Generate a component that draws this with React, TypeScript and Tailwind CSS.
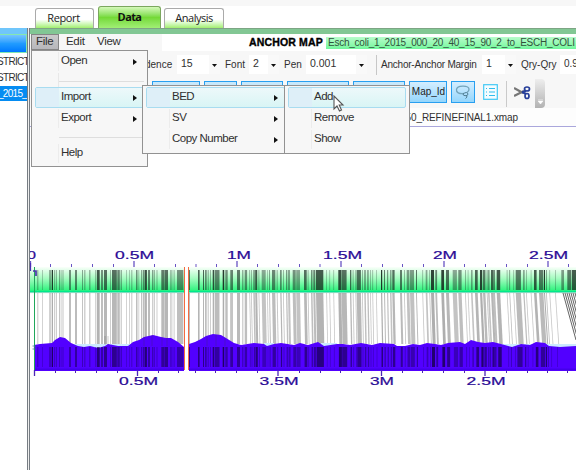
import React from 'react';

type Bar = [number, number, number];

// start, width, darkness of each nick site along the anchor map
const bars: Bar[] = [
  [37.3,1,.4],[42,.8,.3],[49.3,1.4,.5],[51.7,1.3,.9],[54.2,1,.4],[56.2,.8,.4],[59,1,.4],[60.7,.8,.35],[62.5,1,.35],[69,2,.5],[75,2,.55],[82,1,.4],[84.2,1.2,.35],[89.2,1.2,.4],
  [95.3,1,.4],[97,2.7,.75],[101,2,.5],[104,3,.65],[110,.8,.4],[112,4.8,.65],[117.3,2.5,.55],[120.7,1,.5],[126,.8,.3],[129.2,.8,.3],[131.3,1,.35],[136,1.5,.5],[138.5,.7,.4],[141,1.3,.4],[143,1.6,.5],[144.9,2,.8],[148,2,.55],[152.3,1,.6],[154,.8,.4],[156.6,.8,.4],[161.3,3.4,.6],[165,3,.65],[170.3,.8,.4],[171.5,.8,.4],[173.7,.8,.4],[177,6.3,.5],[188.7,1.3,.6],
  [198,1.6,.7],[203,1,.7],[205,1.7,.5],[207.7,1,.4],[210,.8,.4],[212.7,1.6,.8],[215,4.5,.55],[222.7,1.5,.9],[225.3,2.4,.5],[230,.8,.5],[231.2,1.6,.7],[237,3,.6],[242.3,1,.5],[244.7,2.4,.5],[249.3,.8,.4],[251,.8,.4],[253.3,1.5,.5],[255.2,2,.75],[258.5,.8,.4],[261.7,4,.4],[267,.8,.3],[269,1,.4],[272,3.3,.55],[276.7,.9,.4],[280.3,1.2,.7],[283,.8,.4],[286,1.3,.45],[288,2,.4],[292.7,3,.5],[296.2,3.8,.4],[304,2.7,.65],[307.7,.8,.4],[311,1.5,.5],[313.3,2,.55],[316,7.3,.75],[326.2,.8,.3],[329.3,.8,.3],[333.3,.8,.3],[338.3,3,.8],[341.6,5,.65],[350,1.3,.65],[352.7,.8,.4],[355.4,.8,.4],[356.7,4.2,.65],[362,.8,.4],[364.3,1.4,.5],[367.3,1.3,.5],[370,.8,.35],[372.3,.8,.35],[376,.8,.3],
  [381,1.2,.9],[384,1,.6],[387,1.2,.45],[390,1.5,.4],[392.3,2.3,.65],[400,2,.6],[404,.8,.4],[406.7,2.7,.45],[410,4,.45],[416,.9,.7],[422.3,.8,.35],[425.7,1.7,.4],[429.3,.8,.4],[431,3,.85],[435.3,1.8,.55],[441.3,2.7,.85],[446,3,.65],[452.7,4.2,.4],[458.3,3.3,.5],[465,.8,.4],[467.7,.8,.3],[471,1.6,.4],[475,2.7,.7],[480,2.2,.85],[483,2.4,.6],[486.7,.8,.5],[488,1.6,.4],[491,2,.7],[493,2,.5],[496.7,3.5,.75],[506.7,.8,.35],[509.3,.8,.5],[513.3,.8,.35],[515.7,5.2,.6],[523.3,1.2,.55],[526,.8,.35],[530.7,.8,.3],[534,2.6,.75],[539,4.3,.6],[544,1,.9],[546,.8,.5],[549.3,.8,.3],[555,.8,.3],[561.3,2.7,.45],[567.3,4,.6],[572,4,.75],
];

const profile = 'M34 371V345L40 344L52 343L55 340L60 337L65 338L71 343L78 346L84 347L90 346L98 348L105 346L108 344L118 346L128 346L133 342L139 340L144 337L153 335L161 337L166 338L171 338L178 342L184 347V371ZM189 371V344L195 342L201 339L206 336L213 334L221 335L226 338L234 343L241 345L254 343L264 344L267 346L274 344L281 343L294 345L300 343L308 345L318 342L324 346L337 344L343 344L350 345L361 343L372 345L380 343L394 344L397 346L405 346L413 344L420 345L427 343L435 344L441 345L448 343L460 342L465 344L471 340L478 342L485 343L493 342L501 344L512 347L521 344L530 345L536 342L545 343L549 346L560 347L576 346V371Z';

function Label({ x, y, w, children }: { x: number; y: number; w: number; children: string }) {
  return <text x={x} y={y} textLength={w} lengthAdjust="spacingAndGlyphs" fill="#2a0a96" stroke="#2a0a96" strokeWidth=".2" fontSize="10.5" fontFamily="Liberation Sans, sans-serif">{children}</text>;
}

function MapChart() {
  const top = [30.5,50.5,71.5,92.5,113.5,134,154.5,175.5,196,216.5,237,257.5,278.5,299.5,320,341,361.5,382.5,402.5,423.5,444,464.5,485.5,506.5,527.5,548,568.5];
  const bottom = [34.5,55.5,75.5,96.5,117.5,137.5,158.5,178.5,195.5,215.5,236.5,257.5,278,299.5,320.5,340.5,361.5,381.5,402.5,422.5,443.5,464.5,485,506.5,527.5,547.5,567.5];
  const major = [0, 5, 12, 17, 22];
  return (
    <svg className="block h-[343px] w-[546px]" viewBox="30 127 546 343">
      <defs>
        <linearGradient id="anchor" x1="0" x2="0" y1="0" y2="1"><stop stopColor="#fafffa" /><stop offset=".45" stopColor="#a6fcc1" /><stop offset="1" stopColor="#22f277" /></linearGradient>
      </defs>
      {top.map((x, i) => <path key={x} d={i % 5 ? `M${x} 264V267` : `M${x} 261V267`} stroke="#6853c3" strokeWidth={i % 5 ? 1 : 1.3} />)}
      <rect x="30" y="267" width="546" height="25" fill="url(#anchor)" />
      <path d="M30 291.5H576" stroke="#00e98b" strokeWidth="1.4" /><path d="M30 292.6H576" stroke="#58cda8" strokeWidth=".7" />
      {bars.map(([x, w, o], i) => {
        const shift = x > 246 ? 1 + Math.max(0, (x - 380) / 75) : 0;
        return <g key={i}>
          {x < 560 && <path d={`M${x} 293h${w}L${x + w + shift} 344h${-w}Z`} fill="#444" opacity={.22 + o * .25} />}
          <rect x={x} y="270" width={w} height="20" fill="#14251b" opacity={Math.min(1, o)} />
        </g>;
      })}
      {[0, 2, 4, 6, 8, 10, 12].map(n => <path key={n} d={`M${563 + n} 293L${576 + n} 340`} stroke="#3d3d3d" strokeWidth=".8" />)}
      <path d="M71 344H134V348H71ZM264 343H274V347H264ZM321 343H337V347H321ZM501 344H576V348H501Z" fill="#cceaff" />
      <path d={profile} fill="#5200ff" />
      {bars.map(([x, w, o], i) => {
        const shift = x > 246 ? 1 + Math.max(0, (x - 380) / 75) : 0;
        return x < 560 && <rect key={i} x={x + shift * .6} y="347" width={w} height="20" fill="#16004b" opacity={Math.min(1, o * .95)} />;
      })}
      <path d="M105 336V345M108 336V345M144 337V346M152 335V346M162 337V346M167 338V346M207 337V346M216 335V346M225 338V346" stroke="#333" strokeWidth=".7" opacity=".35" />
      <path d="M34 369.2H576" stroke="#3900d8" strokeWidth=".8" />
      <rect x="184" y="267" width="5" height="104" fill="white" />
      <path d="M184.5 267V370M188.5 267V370" stroke="#f36a42" strokeWidth="1" />
      {bottom.map((x, i) => <path key={x} d={major.includes(i) ? `M${x} 370V376` : `M${x} 370V373`} stroke="#4c24b6" strokeWidth={major.includes(i) ? 1.3 : 1} />)}
      <path d="M30.5 263V271" stroke="#4b2bb5" strokeWidth="1.2" />
      <path d="M34.5 267V370" stroke="#20a75b" /><path d="M33 271h3v5" fill="none" stroke="#4b36ac" strokeWidth="1.7" />
      <path d="M32.5 346h3l-1.5 2 1.5 1h-3" fill="none" stroke="#376b98" strokeWidth=".8" />
      <Label x={27} y={259} w={9}>0</Label><Label x={115} y={259} w={39}>0.5M</Label><Label x={227} y={259} w={24}>1M</Label><Label x={323} y={259} w={39}>1.5M</Label><Label x={433} y={259} w={24}>2M</Label><Label x={529} y={259} w={39}>2.5M</Label>
      <Label x={119} y={384.5} w={39}>0.5M</Label><Label x={259.5} y={384.5} w={39}>3.5M</Label><Label x={370} y={384.5} w={24}>3M</Label><Label x={466.5} y={384.5} w={39}>2.5M</Label>
    </svg>
  );
}

function Combo({ value, className }: { value: string; className: string }) {
  return <div className={`flex h-[19px] shrink-0 bg-white ${className}`}><span className="w-0 flex-1 pl-1 text-[10.5px] leading-[17px]">{value}</span><span className="flex h-full w-[11px] items-center justify-center bg-[#f9f9f9]"><svg className="mt-0.5 h-[3px] w-[5px]" viewBox="0 0 5 3"><path d="M0 0h5L2.5 3Z" fill="#111" /></svg></span></div>;
}

function MenuItem({ label, active = false, arrow = true }: { label: string; active?: boolean; arrow?: boolean }) {
  return <div className={`flex h-[21px] shrink-0 items-center rounded-[2px] border ${active ? 'border-[#a8dcf0] bg-gradient-to-b from-[#edf8fa] to-[#d9f5f5]' : 'border-transparent'}`}>
    <span className={`h-full w-[23px] shrink-0 ${active ? 'bg-[#deeff8]' : 'border-r border-[#ececec]'}`} />
    <span className="flex-1 whitespace-nowrap pb-[3px] pl-[2px] text-[11.5px] leading-[16px] tracking-[-.5px]">{label}</span>
    {arrow && <svg className="mr-[6px] h-[6px] w-[4px]" viewBox="0 0 4 6"><path d="M0 0 4 3 0 6Z" fill="#111" /></svg>}
  </div>;
}

export default function App() {
  return (
    <div className="relative flex h-[470px] w-[576px] flex-col overflow-hidden bg-white font-['Liberation_Sans',Arial,sans-serif] text-[11px] text-[#303030]">
      <div className="h-[6px] shrink-0 bg-[#f7f7f7]" />
      <div className="flex h-[22px] shrink-0 items-end pl-[35px] font-['Open_Sans',sans-serif] text-[11px] text-[#222]">
        <div className="flex h-[20px] w-[59px] items-center justify-center rounded-t-[3px] border border-b-0 border-[#aaa] bg-gradient-to-b from-white from-55% to-[#a1ef6d] pr-[2px] tracking-[-.4px]">Report</div>
        <div className="ml-1 flex h-[22px] w-[63px] items-center justify-center rounded-t-[3px] border border-b-0 border-[#7ba75e] bg-gradient-to-b from-[#d5f9b9] via-[#74d936] to-[#a1ef74] text-[11px] font-bold tracking-[-.6px] text-[#111]">Data</div>
        <div className="ml-[3px] flex h-[20px] w-[60px] items-center justify-center rounded-t-[3px] border border-b-0 border-[#aaa] bg-gradient-to-b from-white from-55% to-[#a1ef6d] tracking-[-.5px]">Analysis</div>
      </div>
      <div className="flex min-h-0 flex-1">
        <aside className="flex w-[27px] shrink-0 flex-col overflow-hidden">
          <div className="h-[6px] shrink-0 bg-[#70c6fb]" />
          <div className="h-[19px] shrink-0 border border-l-0 border-[#85e7b1] bg-gradient-to-b from-[#74c4ff] via-[#219cff] to-[#0078ff]" />
          <div className="h-[16px] shrink-0 whitespace-nowrap text-[10px] leading-[18px] tracking-[-0.7px]"><span className="-ml-[3px]">STRICT</span></div>
          <div className="h-[17px] shrink-0 whitespace-nowrap text-[10px] leading-[17px] tracking-[-0.7px]"><span className="-ml-[3px]">STRICT</span></div>
          <div className="h-[15px] shrink-0 bg-[#058cf2] text-[10px] leading-[15px] text-white"><span className="-ml-[2px] tracking-[-0.7px]">_2015_</span></div>
        </aside>
        <div className="w-[3px] shrink-0 border-x border-[#777d83] bg-[#eee]" />
        <main className="flex min-w-0 flex-1 flex-col">
          <div className="h-[6px] shrink-0 border-t border-[#7da584] bg-[#82c794]" />
          <div className="flex h-[17px] shrink-0">
            <div className="flex w-[132px] shrink-0 bg-[#f7f7f7] text-[11.5px] leading-[15px] tracking-[-.3px]">
              <div className="ml-px h-[16px] w-[28px] border border-[#868686] bg-gradient-to-b from-[#cacaca] to-[#b7b7bb] pl-1 leading-[13px]">File</div><span className="ml-[7px] w-[31px]">Edit</span><span>View</span>
            </div>
            <div className="ml-[87px] w-[77px] shrink-0 whitespace-nowrap text-[10.5px] font-bold leading-[17px] tracking-[.15px] text-black [-webkit-text-stroke:.35px_black]">ANCHOR MAP</div>
            <div className="mt-[3px] h-[12px] flex-1 overflow-hidden whitespace-nowrap bg-gradient-to-b from-[#b7fccb] to-[#70f79c] pl-[2px] text-[10px] leading-[12px] tracking-[-.24px] text-[#31523c]">Esch_coli_1_2015_000_20_40_15_90_2_to_ESCH_COLI</div>
          </div>
          <div className="flex h-[27px] shrink-0 items-center overflow-hidden whitespace-nowrap bg-[#f7f7f7] text-[10px]">
            <span className="ml-[115px] w-[32px] shrink-0">dence</span><Combo value="15" className="w-[43px]" /><span className="ml-[5px] w-[24px] shrink-0">Font</span><Combo value="2" className="w-[30px]" /><span className="ml-[5px] w-[22px] shrink-0">Pen</span><Combo value="0.001" className="w-[61px]" />
            <span className="ml-[9px] mr-[4px] h-[20px] w-px shrink-0 bg-[#c7c7c7]" /><span className="w-[101px] shrink-0 tracking-[-.22px]">Anchor-Anchor Margin</span><Combo value="1" className="w-[34px]" /><span className="ml-[5px] w-[39px] shrink-0">Qry-Qry</span><span className="h-[19px] w-[16px] shrink-0 bg-white pl-[4px] leading-[17px]">0.9</span>
          </div>
          <div className="flex h-[30px] shrink-0 items-start bg-[#f7f7f7] pl-[122px] pt-[3px]">
            {['w-[48px]', 'w-[33px]', 'w-[42px]', 'w-[62px]', 'w-[52px]'].map((w, i) => <div key={i} className={`mr-1 h-[22px] shrink-0 border border-[#289ff0] bg-[#c8e8fb] ${w}`} />)}
            <div className="h-[22px] w-[38px] shrink-0 border border-[#289ff0] bg-gradient-to-b from-[#d4eeff] to-[#94d6fc] pl-px text-center text-[10px] leading-[19px] text-[#222]">Map_Id</div>
            <div className="ml-1 flex h-[22px] w-[24px] shrink-0 items-center justify-center border border-[#289ff0] bg-gradient-to-b from-[#d4eeff] to-[#94d6fc]"><svg className="h-[16px] w-[16px]" viewBox="0 0 16 16" fill="none"><path d="M9 9.5C4 10 1 8.5 1.5 5.5C2 1 13.5 1 14 5C14.2 6.5 13.5 7.5 12 8.5" stroke="#73a4bb" strokeWidth="1.3"/><path d="M8 10q4-3 5 0q0 2-3 1.7Q8 11.5 8 10M11 11.5q2.5 1.5-.5 3" stroke="#507e94"/></svg></div>
            <svg className="ml-[8px] mt-[3px] h-[16px] w-[15px] shrink-0" viewBox="0 0 15 16"><rect x=".7" y=".7" width="13.6" height="14.6" fill="#f5fcff" stroke="#43c8f4" strokeWidth="1.2"/><path d="M3 4.5h1M6 4.5h6M3 8h1M6 8h6M3 11.5h1M6 11.5h6" stroke="#30bdec" strokeWidth="1.2" /></svg>
            <span className="ml-[8px] h-[26px] w-px bg-[#cacaca]" />
            <svg className="ml-[7px] mt-[4px] h-[15px] w-[17px] shrink-0" viewBox="0 0 17 15" fill="none"><path d="m0 3 9 5M0 11 10 6" stroke="#777" strokeWidth="2.2"/><ellipse cx="13" cy="4" rx="2.5" ry="2" stroke="#263e99" strokeWidth="1.7"/><ellipse cx="13" cy="11" rx="2" ry="2.5" stroke="#263e99" strokeWidth="1.7"/><path d="m8 7 4-1M8 7l4 2" stroke="#263e99" strokeWidth="2"/></svg>
            <div className="-mt-[2px] ml-[4px] flex h-[29px] w-[10px] shrink-0 items-end justify-center rounded-r bg-gradient-to-b from-[#eee] to-[#b2b2b2] pb-1"><svg className="h-[5px] w-[5px]" viewBox="0 0 5 5"><path d="M0 0h5M0 2h5L2.5 5Z" fill="white" stroke="white" strokeWidth=".6"/></svg></div>
          </div>
          <div className="flex h-[19px] shrink-0 items-center justify-end border-b border-[#aaa7dc] bg-[#fdfdfd] pr-[58px] text-[10px]"><span className="whitespace-nowrap tracking-[-.1px]">50_REFINEFINAL1.xmap</span></div>
          <MapChart />
        </main>
      </div>

      <div className="absolute left-[31px] top-[50px] flex h-[117px] w-[117px] flex-col border border-[#929292] bg-[#f7f7f7] px-[3px]">
        <MenuItem label="Open" /><div className="ml-[24px] mt-[9px] h-px bg-[#dedede]" />
        <div className="mt-[5px] flex flex-col"><MenuItem label="Import" active /><MenuItem label="Export" /></div>
        <div className="ml-[24px] mt-[8px] h-px bg-[#dedede]" /><div className="mt-[5px]"><MenuItem label="Help" arrow={false} /></div>
        <span className="absolute left-[26px] top-[22px] h-[14px] w-px bg-[#e8e8e8]" />
      </div>
      <div className="absolute left-[142px] top-[85px] flex h-[69px] w-[145px] flex-col border border-[#929292] bg-[#f7f7f7] py-px pl-[3px] pr-px">
        <MenuItem label="BED" active /><MenuItem label="SV" /><MenuItem label="Copy Number" />
      </div>
      <div className="absolute left-[284px] top-[85px] flex h-[69px] w-[126px] flex-col border border-[#929292] bg-[#f7f7f7] px-[3px] py-px">
        <MenuItem label="Add" active arrow={false} /><MenuItem label="Remove" arrow={false} /><MenuItem label="Show" arrow={false} />
      </div>
      <svg className="absolute left-[333px] top-[95px] h-[18px] w-[12px]" viewBox="0 0 12 18"><path d="M1 1V14l3-3 2.5 5 2-1-2.3-5H10Z" fill="white" stroke="#555" strokeWidth="1.1" /></svg>
    </div>
  );
}
